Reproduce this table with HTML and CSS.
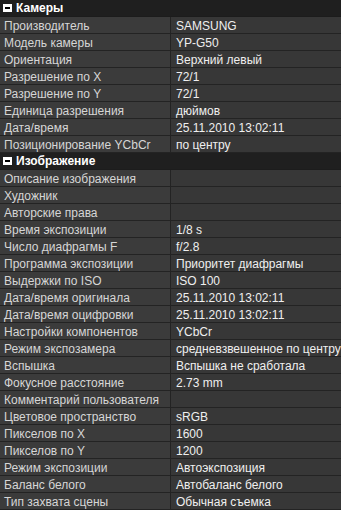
FILE: index.html
```html
<!DOCTYPE html>
<html lang="ru">
<head>
<meta charset="utf-8">
<link rel="stylesheet" href="styles.css">
</head>
<body>
<div class="grid">
  <div class="group"><span class="tog"></span>Камеры</div>
  <div class="row"><div class="k">Производитель</div><div class="v">SAMSUNG</div></div>
  <div class="row"><div class="k">Модель камеры</div><div class="v">YP-G50</div></div>
  <div class="row"><div class="k">Ориентация</div><div class="v">Верхний левый</div></div>
  <div class="row"><div class="k">Разрешение по X</div><div class="v">72/1</div></div>
  <div class="row"><div class="k">Разрешение по Y</div><div class="v">72/1</div></div>
  <div class="row"><div class="k">Единица разрешения</div><div class="v">дюймов</div></div>
  <div class="row"><div class="k">Дата/время</div><div class="v">25.11.2010 13:02:11</div></div>
  <div class="row"><div class="k">Позиционирование YCbCr</div><div class="v">по центру</div></div>
  <div class="group"><span class="tog"></span>Изображение</div>
  <div class="row"><div class="k">Описание изображения</div><div class="v"></div></div>
  <div class="row"><div class="k">Художник</div><div class="v"></div></div>
  <div class="row"><div class="k">Авторские права</div><div class="v"></div></div>
  <div class="row"><div class="k">Время экспозиции</div><div class="v">1/8 s</div></div>
  <div class="row"><div class="k">Число диафрагмы F</div><div class="v">f/2.8</div></div>
  <div class="row"><div class="k">Программа экспозиции</div><div class="v">Приоритет диафрагмы</div></div>
  <div class="row"><div class="k">Выдержки по ISO</div><div class="v">ISO 100</div></div>
  <div class="row"><div class="k">Дата/время оригинала</div><div class="v">25.11.2010 13:02:11</div></div>
  <div class="row"><div class="k">Дата/время оцифровки</div><div class="v">25.11.2010 13:02:11</div></div>
  <div class="row"><div class="k">Настройки компонентов</div><div class="v">YCbCr</div></div>
  <div class="row"><div class="k">Режим экспозамера</div><div class="v">средневзвешенное по центру</div></div>
  <div class="row"><div class="k">Вспышка</div><div class="v">Вспышка не сработала</div></div>
  <div class="row"><div class="k">Фокусное расстояние</div><div class="v">2.73 mm</div></div>
  <div class="row"><div class="k">Комментарий пользователя</div><div class="v"></div></div>
  <div class="row"><div class="k">Цветовое пространство</div><div class="v">sRGB</div></div>
  <div class="row"><div class="k">Пикселов по X</div><div class="v">1600</div></div>
  <div class="row"><div class="k">Пикселов по Y</div><div class="v">1200</div></div>
  <div class="row"><div class="k">Режим экспозиции</div><div class="v">Автоэкспозиция</div></div>
  <div class="row"><div class="k">Баланс белого</div><div class="v">Автобаланс белого</div></div>
  <div class="row"><div class="k">Тип захвата сцены</div><div class="v">Обычная съемка</div></div>
</div>
</body>
</html>
```
FILE: styles.css
```css
html, body {
  margin: 0;
  padding: 0;
  background: #1f1f1f;
}
.grid {
  width: 341px;
  font-family: "Liberation Sans", Arial, sans-serif;
  font-size: 12px;
  line-height: 16px;
}
.group {
  height: 16px;
  border-bottom: 1px solid #1c1c1c;
  background: #1f1f1f;
  color: #ffffff;
  font-weight: bold;
  display: flex;
  align-items: center;
  white-space: nowrap;
}
.tog {
  width: 9px;
  height: 8px;
  background: #ffffff;
  margin: 0 4px 0 3px;
  position: relative;
  flex: none;
}
.tog::after {
  content: "";
  position: absolute;
  left: 2px;
  top: 3px;
  width: 5px;
  height: 2px;
  background: #000;
}
.row {
  display: grid;
  grid-template-columns: 171px 1fr;
  height: 16px;
  border-bottom: 1px solid #232323;
}
.k {
  background: #3b3b3b;
  color: #d6d6d6;
  padding-left: 4px;
  padding-top: 1px;
  white-space: nowrap;
  overflow: hidden;
  border-right: 1px solid #232323;
}
.v {
  background: #373737;
  color: #efefef;
  padding-left: 5px;
  padding-top: 1px;
  white-space: nowrap;
  overflow: hidden;
}
```
